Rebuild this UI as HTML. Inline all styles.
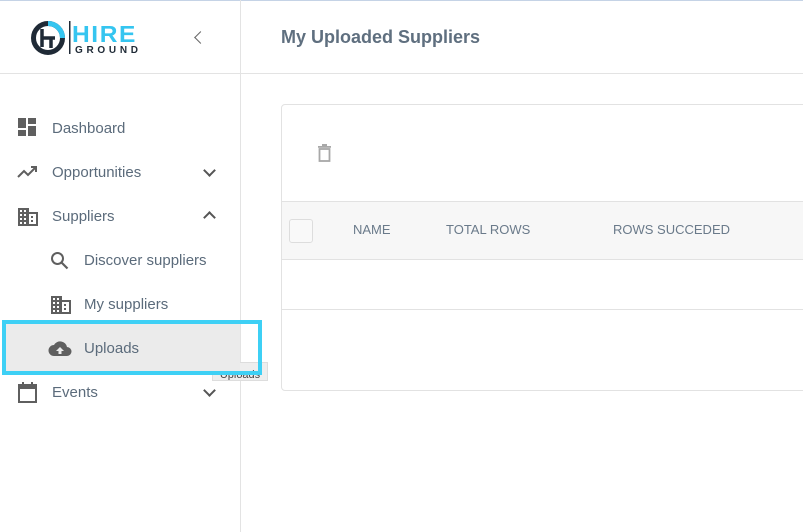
<!DOCTYPE html>
<html><head><style>
body{margin:0;width:803px;height:532px;position:relative;overflow:hidden;background:#fff;font-family:"Liberation Sans",sans-serif;color:#5b6b7b}
.abs{position:absolute}
.side{left:0;top:0;width:240px;height:532px;border-right:1px solid #e3e3e3}
.item{position:absolute;font-size:15px;color:#5b6b7b;line-height:20px}
.chev{position:absolute;left:205px;width:8px;height:8px;border-right:2px solid #555;border-bottom:2px solid #555}
</style></head><body>
<div class="abs" style="left:0;top:0;width:803px;height:1px;background:#c5d3e6"></div>
<div class="abs side"></div>
<div class="abs" style="left:0;top:73px;width:803px;height:1px;background:#e3e3e3"></div>
<!-- logo -->
<svg class="abs" style="left:30px;top:18px" width="112" height="40" viewBox="0 0 112 40">
<circle cx="18" cy="20" r="14.5" fill="none" stroke="#1f2a36" stroke-width="5"/>
<path d="M18 5.5 A14.5 14.5 0 0 1 32.5 20" fill="none" stroke="#35c5f0" stroke-width="5"/>
<path d="M12 11v18M12 20h13M21 20v10" stroke="#1f2a36" stroke-width="3.5" fill="none"/>
<rect x="39" y="3" width="1.5" height="33" fill="#1f2a36"/>
<text x="42" y="24" font-family="Liberation Sans" font-weight="bold" font-size="23" fill="#35c5f0" letter-spacing="1.5" textLength="65" lengthAdjust="spacingAndGlyphs">HIRE</text>
<text x="45" y="35" font-family="Liberation Sans" font-weight="bold" font-size="10" fill="#1f2a36" textLength="63" lengthAdjust="spacing">GROUND</text>
</svg>
<div class="abs" style="left:196px;top:33px;width:8px;height:8px;border-left:1.5px solid #666;border-bottom:1.5px solid #666;transform:rotate(45deg)"></div>
<div class="abs" style="left:281px;top:27px;font-size:18px;font-weight:bold;color:#5f6f7f">My Uploaded Suppliers</div>
<!-- highlight -->
<div class="abs" style="left:212px;top:362px;width:54px;height:17px;background:#eee;border:1px solid #ddd;font-size:11px;color:#444;line-height:24px;text-align:center;overflow:hidden">Uploads</div>
<div class="abs" style="left:5px;top:323px;width:235px;height:48px;background:#ebebeb"></div>
<div class="abs" style="left:2px;top:320px;width:252px;height:47px;border:4px solid #3ed0f5"></div>
<!-- icons -->
<svg class="abs" style="left:18px;top:118px" width="20" height="20"><rect x="0" y="0" width="8" height="10" fill="#5f5f5f"/><rect x="10" y="0" width="8" height="6" fill="#5f5f5f"/><rect x="0" y="12" width="8" height="6" fill="#5f5f5f"/><rect x="10" y="8" width="8" height="10" fill="#5f5f5f"/></svg>
<svg class="abs" style="left:17px;top:164px" width="22" height="16"><path d="M1 13l6-6 4 4 8-8M14 3h5v5" stroke="#5f5f5f" stroke-width="2" fill="none"/></svg>
<svg class="abs" style="left:18px;top:208px" width="22" height="18"><path d="M0 0h11v4h9v14H0z" fill="#5f5f5f"/><g fill="#fff"><rect x="2" y="2" width="2" height="2"/><rect x="6" y="2" width="2" height="2"/><rect x="2" y="6" width="2" height="2"/><rect x="6" y="6" width="2" height="2"/><rect x="2" y="10" width="2" height="2"/><rect x="6" y="10" width="2" height="2"/><rect x="2" y="14" width="2" height="2"/><rect x="6" y="14" width="2" height="2"/><rect x="11" y="6" width="7" height="10"/></g><rect x="13" y="8" width="2" height="2" fill="#5f5f5f"/><rect x="13" y="12" width="2" height="2" fill="#5f5f5f"/></svg>
<svg class="abs" style="left:50px;top:251px" width="20" height="20"><circle cx="7.5" cy="7.5" r="5.5" stroke="#5f5f5f" stroke-width="2" fill="none"/><path d="M11.5 11.5l6 6" stroke="#5f5f5f" stroke-width="2.2"/></svg>
<svg class="abs" style="left:51px;top:296px" width="22" height="18"><path d="M0 0h11v4h9v14H0z" fill="#5f5f5f"/><g fill="#fff"><rect x="2" y="2" width="2" height="2"/><rect x="6" y="2" width="2" height="2"/><rect x="2" y="6" width="2" height="2"/><rect x="6" y="6" width="2" height="2"/><rect x="2" y="10" width="2" height="2"/><rect x="6" y="10" width="2" height="2"/><rect x="2" y="14" width="2" height="2"/><rect x="6" y="14" width="2" height="2"/><rect x="11" y="6" width="7" height="10"/></g><rect x="13" y="8" width="2" height="2" fill="#5f5f5f"/><rect x="13" y="12" width="2" height="2" fill="#5f5f5f"/></svg>
<svg class="abs" style="left:48px;top:340px" width="24" height="18"><path d="M19 7A7 7 0 0 0 6 5 5.5 5.5 0 0 0 6 16h13a4.5 4.5 0 0 0 0-9z" fill="#5f5f5f"/><path d="M12 7l-4 4h2.5v3h3v-3H16z" fill="#ebebeb"/></svg>
<svg class="abs" style="left:18px;top:382px" width="20" height="22"><rect x="1" y="3" width="17" height="17" fill="none" stroke="#5f5f5f" stroke-width="2"/><rect x="1" y="3" width="17" height="4" fill="#5f5f5f"/><rect x="4" y="0" width="2" height="4" fill="#5f5f5f"/><rect x="13" y="0" width="2" height="4" fill="#5f5f5f"/></svg>
<div class="item" style="left:52px;top:119px">Dashboard</div>
<div class="item" style="left:52px;top:163px">Opportunities</div>
<div class="item" style="left:52px;top:207px">Suppliers</div>
<div class="item" style="left:84px;top:251px">Discover suppliers</div>
<div class="item" style="left:84px;top:295px">My suppliers</div>
<div class="item" style="left:84px;top:339px">Uploads</div>
<div class="item" style="left:52px;top:383px">Events</div>
<div class="chev" style="top:166px;transform:rotate(45deg);width:7px;height:7px"></div>
<div class="chev" style="top:213px;transform:rotate(-135deg);width:7px;height:7px"></div>
<div class="chev" style="top:386px;transform:rotate(45deg);width:7px;height:7px"></div>
<!-- card -->
<div class="abs" style="left:281px;top:104px;width:540px;height:285px;border:1px solid #e2e2e2;border-radius:4px"></div>
<svg class="abs" style="left:317px;top:144px" width="16" height="20"><rect x="1" y="2" width="13" height="1.8" fill="#a8a8a8"/><rect x="5" y="0" width="5" height="2" fill="#a8a8a8"/><rect x="2.5" y="5" width="10" height="12" fill="none" stroke="#a8a8a8" stroke-width="1.8"/></svg>
<div class="abs" style="left:282px;top:201px;width:521px;height:57px;background:#f7f7f7;border-top:1px solid #e2e2e2;border-bottom:1px solid #e2e2e2"></div>
<div class="abs" style="left:289px;top:219px;width:22px;height:22px;border:1px solid #ddd;border-radius:3px;background:#f9f9f9"></div>
<div class="abs" style="left:353px;top:222px;font-size:13px;color:#6a7a8a">NAME</div>
<div class="abs" style="left:446px;top:222px;font-size:13px;color:#6a7a8a">TOTAL ROWS</div>
<div class="abs" style="left:613px;top:222px;font-size:13px;color:#6a7a8a">ROWS SUCCEDED</div>
<div class="abs" style="left:282px;top:309px;width:521px;height:1px;background:#e2e2e2"></div>
</body></html>
